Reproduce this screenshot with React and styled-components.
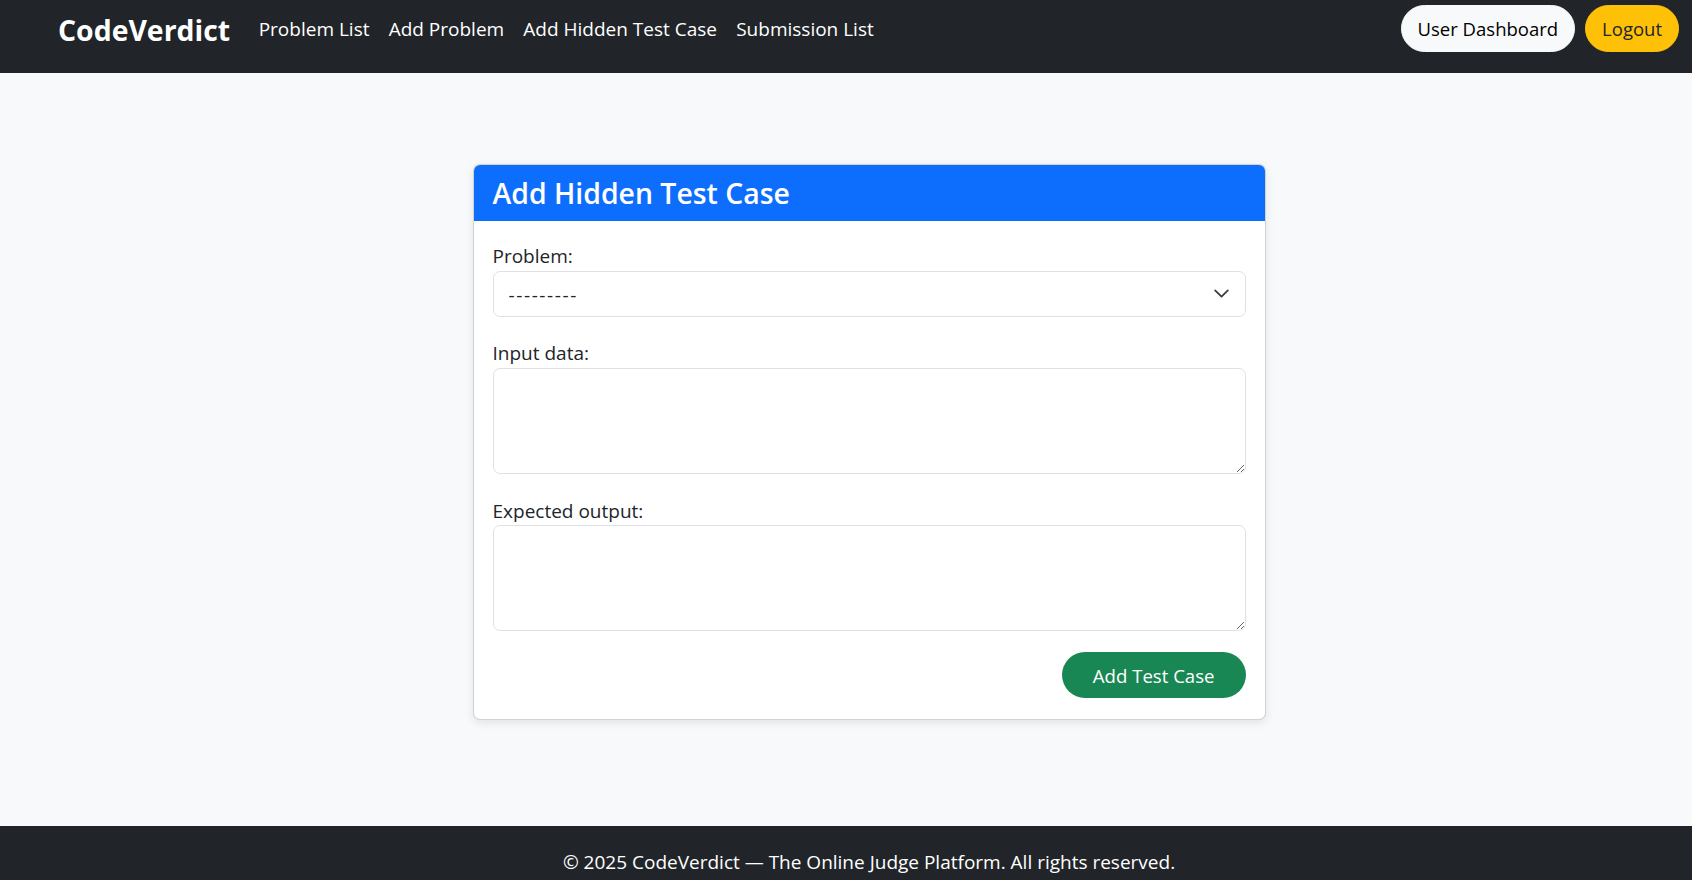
import styled, { createGlobalStyle } from "styled-components";

const GlobalStyle = createGlobalStyle`
  html, body {
    margin: 0;
    padding: 0;
    overflow: hidden;
  }
  body {
    font-family: "Open Sans", "Noto Sans", "Liberation Sans", sans-serif;
    font-size: 19px;
    line-height: 28.8px;
    color: #212529;
    background: #f8f9fa;
  }
  * {
    box-sizing: border-box;
  }
`;

const navLinks = [
  "Problem List",
  "Add Problem",
  "Add Hidden Test Case",
  "Submission List",
];

export default function App() {
  return (
    <>
      <GlobalStyle />
      <Page>
        <NavBar>
          <Brand href="#">CodeVerdict</Brand>
          <NavList>
            {navLinks.map((label) => (
              <NavLink key={label} href="#">
                {label}
              </NavLink>
            ))}
          </NavList>
          <NavActions>
            <PillButton $bg="#f8f9fa" $color="#000">
              User Dashboard
            </PillButton>
            <PillButton $bg="#ffc107" $color="#212529">
              Logout
            </PillButton>
          </NavActions>
        </NavBar>

        <Main>
          <Card>
            <CardHeader>
              <CardTitle>Add Hidden Test Case</CardTitle>
            </CardHeader>
            <CardBody>
              <Field>
                <Label htmlFor="problem">Problem:</Label>
                <SelectWrap>
                  <Select id="problem" defaultValue="">
                    <option value="">---------</option>
                  </Select>
                  <Chevron viewBox="0 0 16 16" aria-hidden="true">
                    <path
                      d="m2 5 6 6 6-6"
                      fill="none"
                      stroke="#343a40"
                      strokeWidth="1.6"
                      strokeLinecap="round"
                      strokeLinejoin="round"
                    />
                  </Chevron>
                </SelectWrap>
              </Field>
              <Field>
                <Label htmlFor="input">Input data:</Label>
                <TextArea id="input" />
              </Field>
              <Field>
                <Label htmlFor="output">Expected output:</Label>
                <TextArea id="output" />
              </Field>
              <Actions>
                <SubmitButton type="button">Add Test Case</SubmitButton>
              </Actions>
            </CardBody>
          </Card>
        </Main>

        <Footer>
          © 2025 CodeVerdict — The Online Judge Platform. All rights reserved.
        </Footer>
      </Page>
    </>
  );
}

const Page = styled.div`
  display: flex;
  flex-direction: column;
  min-height: 880px;
`;

const NavBar = styled.nav`
  display: flex;
  align-items: center;
  height: 73px;
  padding: 5px 13px 21px 58px;
  background: #212529;
`;

const Brand = styled.a`
  font-size: 28.4px;
  font-weight: 700;
  color: #fff;
  text-decoration: none;
  margin-right: 19px;
  line-height: 36px;
  padding-top: 3px;
`;

const NavList = styled.div`
  display: flex;
  align-items: center;
  padding-top: 1px;
`;

const NavLink = styled.a`
  padding: 0 9.6px;
  color: #fff;
  text-decoration: none;
  font-size: 19px;
`;

const NavActions = styled.div`
  display: flex;
  gap: 10px;
  margin-left: auto;
`;

const PillButton = styled.button`
  height: 47px;
  padding: 0 16px;
  border: 1px solid ${(p) => p.$bg};
  border-radius: 50rem;
  background: ${(p) => p.$bg};
  color: ${(p) => p.$color};
  font-family: inherit;
  font-size: 18.5px;
  cursor: pointer;
`;

const Main = styled.main`
  flex: 1;
  display: flex;
  justify-content: center;
  align-items: flex-start;
  padding: 91px 0 106px 46px;
`;

const Card = styled.section`
  width: 793px;
  background: #fff;
  border: 1px solid rgba(0, 0, 0, 0.175);
  border-radius: 7px;
  box-shadow: 0 3px 10px rgba(0, 0, 0, 0.09);
  overflow: hidden;
`;

const CardHeader = styled.header`
  height: 56px;
  display: flex;
  align-items: center;
  padding: 0 19px;
  background: #0d6efd;
`;

const CardTitle = styled.h2`
  margin: 0;
  color: #fff;
  font-size: 28.4px;
  font-weight: 600;
  line-height: 34px;
`;

const CardBody = styled.div`
  display: flex;
  flex-direction: column;
  gap: 22.5px;
  padding: 21px 19px 21px;
`;

const Field = styled.div`
  display: flex;
  flex-direction: column;
`;

const Label = styled.label`
  display: block;
  line-height: 28.8px;
`;

const SelectWrap = styled.div`
  position: relative;
`;

const Select = styled.select`
  width: 100%;
  height: 46px;
  padding: 2px 48px 0 15px;
  border: 1px solid #dee2e6;
  border-radius: 7px;
  background: #fff;
  color: #212529;
  font-family: inherit;
  font-size: 19px;
  letter-spacing: 1.6px;
  appearance: none;
  outline: none;
`;

const Chevron = styled.svg`
  position: absolute;
  right: 16px;
  top: 14px;
  width: 17px;
  height: 17px;
  pointer-events: none;
`;

const TextArea = styled.textarea`
  display: block;
  width: 100%;
  height: 106px;
  padding: 7px 14px;
  border: 1px solid #dee2e6;
  border-radius: 7px;
  font-family: inherit;
  font-size: 19px;
  resize: vertical;
  outline: none;
`;

const Actions = styled.div`
  display: flex;
  justify-content: flex-end;
  margin-top: -1.5px;
`;

const SubmitButton = styled.button`
  height: 46px;
  padding: 0 31px;
  border: none;
  border-radius: 50rem;
  background: #198754;
  color: #fff;
  font-family: inherit;
  font-size: 18.6px;
  cursor: pointer;
`;

const Footer = styled.footer`
  height: 55px;
  padding: 22px 0 0 46px;
  background: #212529;
  color: #fff;
  text-align: center;
  font-size: 19px;
  line-height: 28.8px;
`;
